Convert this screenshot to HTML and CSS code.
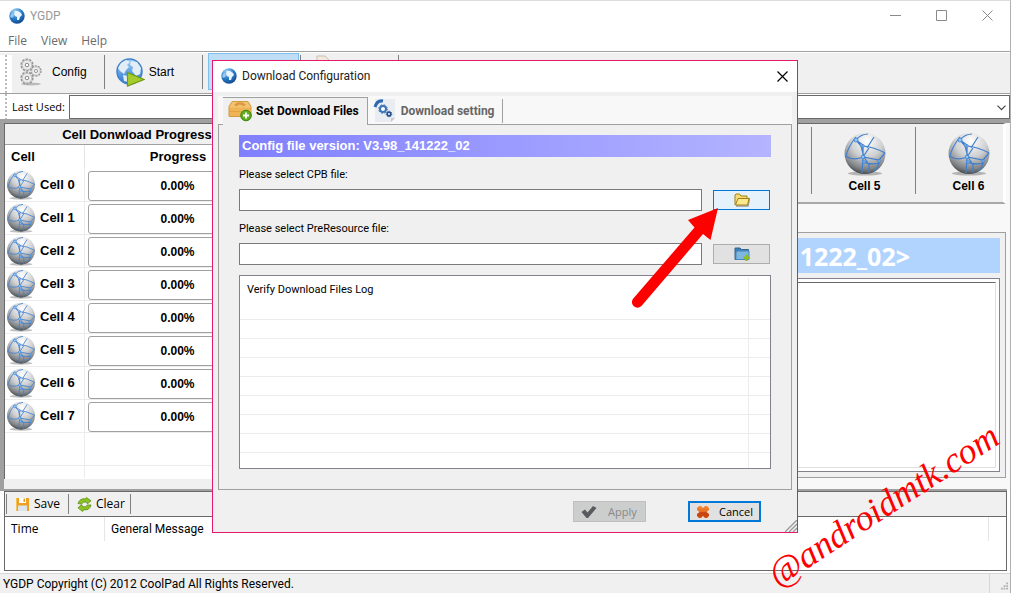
FILE: index.html
```
<!DOCTYPE html>
<html lang="en">
<head>
<meta charset="utf-8">
<title>YGDP</title>
<link rel="stylesheet" href="styles.css">
</head>
<body>
<svg class="defs" aria-hidden="true">
  <defs>
    <radialGradient id="ball" cx=".55" cy=".2" r=".85"><stop offset="0" stop-color="#fff"/><stop offset=".45" stop-color="#cfd0d2"/><stop offset=".8" stop-color="#808386"/><stop offset="1" stop-color="#35383b"/></radialGradient>
    <radialGradient id="blue" cx=".35" cy=".2" r=".9"><stop offset="0" stop-color="#9fd2f5"/><stop offset=".5" stop-color="#2b7fca"/><stop offset="1" stop-color="#0b3f86"/></radialGradient>
    <linearGradient id="sky" x2="0" y2="1"><stop offset="0" stop-color="#9fd0f8"/><stop offset="1" stop-color="#2b78d0"/></linearGradient>
    <linearGradient id="orange" x2="0" y2="1"><stop offset="0" stop-color="#f58a34"/><stop offset=".5" stop-color="#e56a20"/><stop offset=".55" stop-color="#c8420c"/><stop offset="1" stop-color="#d04a10"/></linearGradient>
    <symbol id="globe" viewBox="0 0 44 44">
      <ellipse cx="22" cy="41.500" rx="17" ry="2" fill="#000" opacity=".25"/>
      <circle cx="22" cy="21.500" r="20.500" fill="url(#ball)"/>
      <g fill="none" stroke="#3f7fce" stroke-width="1.200">
        <path d="M13 5Q5 15 3 24M13 8L20 13L20 25M13 8L18 14L21 25L36 28L42 21M20 14Q31 15 42 21M24 16L31 5M2 24Q11 29 20 25M20 25L26 16M20 25L19 41M20 30Q28 33 37 31M36 29Q36 35 31 39M13 8Q18 2 25 2M21 25L26 33L26 41"/>
      </g>
      <g fill="#8ec8ff" stroke="#3f7fce" stroke-width=".8"><circle cx="13" cy="8" r="2"/><circle cx="20" cy="25" r="1.800"/><circle cx="20" cy="14" r="1.300"/><circle cx="21" cy="30" r="1.300"/><circle cx="36" cy="29" r="1.300"/></g>
    </symbol>
    <symbol id="logo" viewBox="0 0 16 16">
      <circle cx="8" cy="8" r="7.700" fill="url(#blue)"/>
      <path d="M6 3L9 3L12 5L13 7L11 9L10 12L8 12L8 9L6 8L5 6Z" fill="#e9f5fd"/>
      <path d="M2 6L4 5L5 8L3 10L1 9Z" fill="#b9dcf3" opacity=".7"/>
    </symbol>
    <symbol id="gear" viewBox="0 0 14 14">
      <circle cx="7" cy="7" r="5.800" fill="#e9e9e9" stroke="#969696" stroke-width="1.600" stroke-dasharray="2.400 1.200"/>
      <circle cx="7" cy="7" r="4.800" fill="#ededed" stroke="#b5b5b5" stroke-width=".8"/>
      <circle cx="7" cy="7" r="1.800" fill="#fff" stroke="#888"/>
    </symbol>
  </defs>
</svg>

<div class="app">
  <header class="titlebar">
    <svg class="logo"><use href="#logo"/></svg>
    <span class="app-name">YGDP</span>
    <div class="win-buttons">
      <button class="win-button" aria-label="Minimize"><svg viewBox="0 0 11 11"><path d="M0 5.500H11"/></svg></button>
      <button class="win-button" aria-label="Maximize"><svg viewBox="0 0 11 11"><path d="M.5 .5H10.500V10.500H.5Z"/></svg></button>
      <button class="win-button" aria-label="Close"><svg viewBox="0 0 11 11"><path d="M.5 .5L10.500 10.500M10.500 .5L.5 10.500"/></svg></button>
    </div>
  </header>
  <nav class="menubar"><button>File</button><button>View</button><button>Help</button></nav>
  <div class="toolbar">
    <i class="grip"></i>
    <button class="tool">
      <svg class="icon-gears" viewBox="0 0 25 28"><ellipse cx="12" cy="26" rx="10" ry="1.500" fill="#bbb"/><use href="#gear" x="1" y="0" width="14" height="14"/><use href="#gear" x="11" y="7" width="12" height="12"/><use href="#gear" x="1" y="13" width="14" height="14"/></svg>
      Config</button>
    <button class="tool tool-start">
      <svg class="icon-start" viewBox="0 0 29 29"><circle cx="13.500" cy="13.500" r="12.500" fill="url(#sky)" stroke="#3f82cc" stroke-width="1.500"/><path d="M5 5L10 2L14 4L11 7L13 9L10 12L8 16L4 13L2 10ZM15 3L21 4L25 10L24 16L20 18L16 13L17 9L14 7ZM7 17L12 18L12 24L8 23Z" fill="#e3edf5"/><path d="M11.500 14.500L28 21.500L11.500 28Z" fill="#a3cc2c" stroke="#6f9a12" stroke-width="1.200"/></svg>
      Start</button>
    <button class="tool tool-active" aria-label="Stop"></button>
    <button class="tool tool-blank" aria-label="Log"><svg viewBox="0 0 16 16"><path d="M2 1H10L14 5V15H2Z" fill="#f3eadf" stroke="#cbbfae"/></svg></button>
  </div>
  <div class="lastbar">
    <i class="grip"></i>
    <label for="last">Last Used:</label>
    <div class="combo"><select id="last"><option></option></select>
      <svg viewBox="0 0 9 6"><path d="M.5 .7L4.500 4.700L8.500 .7"/></svg></div>
  </div>

  <main class="workspace">
    <section class="cells">
      <h2>Cell Donwload Progress</h2>
      <table>
        <thead><tr><th class="name-col">Cell</th><th class="prog-col">Progress</th></tr></thead>
        <tbody>
          <tr><td><div class="cell"><svg><use href="#globe"/></svg>Cell 0</div></td><td><div class="bar">0.00%</div></td></tr>
          <tr><td><div class="cell"><svg><use href="#globe"/></svg>Cell 1</div></td><td><div class="bar">0.00%</div></td></tr>
          <tr><td><div class="cell"><svg><use href="#globe"/></svg>Cell 2</div></td><td><div class="bar">0.00%</div></td></tr>
          <tr><td><div class="cell"><svg><use href="#globe"/></svg>Cell 3</div></td><td><div class="bar">0.00%</div></td></tr>
          <tr><td><div class="cell"><svg><use href="#globe"/></svg>Cell 4</div></td><td><div class="bar">0.00%</div></td></tr>
          <tr><td><div class="cell"><svg><use href="#globe"/></svg>Cell 5</div></td><td><div class="bar">0.00%</div></td></tr>
          <tr><td><div class="cell"><svg><use href="#globe"/></svg>Cell 6</div></td><td><div class="bar">0.00%</div></td></tr>
          <tr><td><div class="cell"><svg><use href="#globe"/></svg>Cell 7</div></td><td><div class="bar">0.00%</div></td></tr>
          <tr><td></td><td></td></tr>
          <tr class="rest"><td></td><td></td></tr>
        </tbody>
      </table>
    </section>
    <section class="detail">
      <div class="cell-tabs">
        <button class="cell-tab"><svg><use href="#globe"/></svg>Cell 5</button>
        <button class="cell-tab"><svg><use href="#globe"/></svg>Cell 6</button>
      </div>
      <div class="page">
        <div class="version">1222_02&gt;</div>
        <div class="log"><div class="log-inner"></div></div>
      </div>
    </section>
  </main>

  <section class="messages">
    <div class="msg-tools">
      <button><svg viewBox="0 0 15 15"><path d="M1 1H14V14H1Z" fill="#f0a020"/><path d="M4 1H11V6H4Z" fill="#fff"/><path d="M8.500 1.500H10V5H8.500Z" fill="#e59a24"/><path d="M3 8.500H12V14H3Z" fill="#dce3ea"/><path d="M1 1H2V14H1Z" fill="#f8c050"/></svg>Save</button>
      <button><svg viewBox="0 0 16 16"><path d="M1 7Q3 1 9 2L10 .5L15 4L11 7.500L10.500 5.500Q6 4.500 5 7.500ZM15 8.500Q13 15 7 13.500L6 15.500L1 11.500L5 8L6 10.500Q10 11 11 8.500Z" fill="#8cc221" stroke="#5a8a14" stroke-width=".8"/></svg>Clear</button>
    </div>
    <div class="msg-head"><span class="time">Time</span><span class="general">General Message</span><span class="end"></span></div>
  </section>
  <footer class="status"><span>YGDP Copyright (C) 2012 CoolPad All Rights Reserved.</span>
    <svg viewBox="0 0 8 8"><path d="M6 0h2v2h-2zM3 3h2v2h-2zM6 3h2v2h-2zM0 6h2v2h-2zM3 6h2v2h-2zM6 6h2v2h-2z" fill="#b0b0b0"/></svg></footer>
</div>

<div class="dialog" role="dialog" aria-label="Download Configuration">
  <header class="dlg-title">
    <svg class="logo"><use href="#logo"/></svg>
    <span>Download Configuration</span>
    <button class="dlg-close" aria-label="Close"><svg viewBox="0 0 11 11"><path d="M.5 .5L10.500 10.500M10.500 .5L.5 10.500"/></svg></button>
  </header>
  <div class="dlg-body">
    <div class="tabs" role="tablist">
      <button class="tab tab-on" role="tab" aria-selected="true"><svg viewBox="0 0 24 21"><path d="M4 1H20L23 6V16H1V6Z" fill="#efb555" stroke="#d39a42"/><path d="M4.500 1.500H19.500L22.500 7H1.500Z" fill="#f3c374"/><path d="M6 4Q12 -1 18 4L16 6L12 4L8 6Z" fill="#dc9a40"/><path d="M2 11H22" stroke="#e2a345"/><circle cx="18" cy="15" r="5.300" fill="#63ad20" stroke="#3c8410"/><path d="M18 12V18M15 15H21" stroke="#fff" stroke-width="1.800"/></svg>Set Download Files</button>
      <button class="tab" role="tab"><svg viewBox="0 0 24 24"><path d="M2 0H22V19L18 23H2Z" fill="#e9edf2"/><path d="M22 19L18 23V19Z" fill="#c3c8d0"/><path d="M2 8Q4 1 10 2" fill="none" stroke="#2d69b0" stroke-width="3"/><circle cx="10" cy="10" r="3" fill="#fff" stroke="#3d74b8" stroke-width="2"/><circle cx="10" cy="10" r="4.300" fill="none" stroke="#3d74b8" stroke-dasharray="1.800 1.600"/><circle cx="16" cy="15" r="1.800" fill="#fff" stroke="#22518e" stroke-width="1.700"/><circle cx="16" cy="15" r="2.800" fill="none" stroke="#22518e" stroke-width=".8" stroke-dasharray="1.300 1.200"/></svg>Download setting</button>
    </div>
    <div class="tab-page">
      <h3>Config file version: V3.98_141222_02</h3>
      <label for="cpb">Please select CPB file:</label>
      <div class="file-row"><input id="cpb" type="text"><button class="browse browse-hot" aria-label="Browse CPB file"><svg viewBox="0 0 16 14"><path d="M2 13H14L15.500 5" fill="none" stroke="#666" stroke-width="1.500" opacity=".6"/><path d="M1 12V2L2 1H5.500L7 3H13V6" fill="#f5dc74" stroke="#a68014"/><path d="M4 5.500H15L13.500 12H1.500Z" fill="#fbe98d" stroke="#a68014"/></svg></button></div>
      <label for="pre">Please select PreResource file:</label>
      <div class="file-row"><input id="pre" type="text"><button class="browse" aria-label="Browse PreResource file"><svg viewBox="0 0 16 14"><path d="M1 12.500V1H6L7.500 2.500H14.500V12.500Z" fill="#3f7fb8" stroke="#33638f"/><path d="M2 5L4 4H15V12.500H2Z" fill="#7db7e2" stroke="#4b86b8"/><path d="M12.500 7.500V14M9.500 10.800H15.800" stroke="#8fc01c" stroke-width="2.400"/></svg></button></div>
      <div class="verify">
        <div class="verify-head">Verify Download Files Log</div>
        <div class="verify-rows"></div>
      </div>
    </div>
    <div class="actions">
      <button class="action" disabled><svg viewBox="0 0 16 14"><path d="M.5 7L4 4.500L6.500 7.500L12 1L15.500 3L7 13H5.500Z" fill="#575b5e"/></svg><span>Apply</span></button>
      <button class="action action-main"><svg viewBox="0 0 14 14"><path d="M1 3L3 1L5 1L7 3L9 1L11 1L13 3L13 5L10.500 7L13 9L13 11L11 13L9 13L7 11L5 13L3 13L1 11L1 9L3.500 7L1 5Z" fill="url(#orange)"/></svg><span>Cancel</span></button>
    </div>
  </div>
  <svg class="resize" viewBox="0 0 12 12"><path d="M0 12L12 0M4 12L12 4M8 12L12 8" stroke="#999" stroke-width="1.300"/></svg>
  <svg class="arrow" viewBox="0 0 90 104"><path d="M86 1L56 13L62.500 20.500L1.300 91.500A5.500 5.500 0 0 0 9.700 98.800L71 27L78.500 33Z" fill="#f00"/></svg>
</div>
<div class="watermark">@androidmtk.com</div>
</body>
</html>
```
FILE: styles.css
```
* { box-sizing: border-box; }
body { margin: 0; position: relative; overflow: hidden; background: #fff; color: #000; font: 12px/16px Roboto, "Noto Sans", sans-serif; }
button { border: 0; padding: 0; margin: 0; background: none; font: inherit; color: inherit; }
svg { display: block; flex: none; }
.defs { position: absolute; width: 0; height: 0; }

.app { min-height: 100vh; display: flex; flex-direction: column; border: solid #b0b0b0; border-width: 1px 1px 0 0; border-top-color: #ddd; }
.logo { width: 16px; height: 16px; }
.titlebar { height: 29px; display: flex; align-items: center; gap: 5px; padding-left: 9px; color: #999; }
.win-buttons { margin-left: auto; display: flex; }
.win-button { width: 46px; height: 29px; display: grid; place-items: center; }
.win-button svg { width: 11px; height: 11px; fill: none; stroke: #8a8a8a; stroke-width: 1; }
.menubar { height: 22px; display: flex; align-items: center; gap: 14px; padding-left: 8px; color: #6c6c6c; border-bottom: 1px solid #a0a0a0; font-family: "Open Sans", sans-serif; }

.toolbar { height: 42px; display: flex; align-items: flex-start; padding-top: 2px; background: #f0f0f0; border-top: 1px solid #fff; border-bottom: 1px solid #a0a0a0; font: 12px/16px "Liberation Sans", sans-serif; }
.grip { align-self: stretch; width: 12px; background: repeating-linear-gradient(#bbb 0 2px, #fff 2px 4px) 5px 0 / 2px 100% no-repeat #fff; }
.tool { height: 34px; display: flex; align-items: center; padding: 0 17px 0 7px; gap: 8px; border-right: 1px solid #808080; }
.tool-start { padding: 0 28px 0 11px; gap: 4px; }
.icon-gears { width: 25px; height: 28px; }
.icon-start { width: 29px; height: 29px; }
.tool-active { width: 91px; height: 37px; margin: -2px 1px 0 5px; background: #bfddf5; border: 1px solid #7cc0f0; }
.tool-blank { width: 99px; padding-left: 14px; border-left: 1px solid #808080; align-items: flex-start; }
.tool-blank svg { width: 16px; height: 16px; }
.lastbar { height: 25px; display: flex; background: #fff; font: 11px/25px "Open Sans", sans-serif; }
.lastbar label { padding-right: 4px; }
.combo { flex: 1; position: relative; margin-top: 1px; }
.combo select { display: block; width: 100%; height: 24px; appearance: none; background: #fff; border: 1px solid #6a6a6a; border-radius: 0; }
.combo svg { position: absolute; right: 4px; top: 10px; width: 9px; height: 6px; fill: none; stroke: #444; stroke-width: 1.2; }

.workspace { flex: 1; display: flex; gap: 8px; background: #f0f0f0; border: solid #a0a0a0; border-width: 4px 0 0 4px; font: bold 13px/16px "Liberation Sans", sans-serif; }
.cells { width: 268px; margin-bottom: 12px; background: #fff; border: solid #696969; border-width: 1px 0 0 1px; display: flex; flex-direction: column; }
.cells h2 { margin: 0; height: 21px; font: inherit; line-height: 21px; text-align: center; padding-right: 3px; background: #f0f0f0; border-bottom: 1px solid #a0a0a0; }
.cells table { width: 100%; border-collapse: separate; border-spacing: 0; table-layout: fixed; }
.cells th { height: 24px; padding: 0; border-right: 1px solid #e5e5e5; }
.name-col { width: 80px; text-align: left; }
.cells .name-col { padding-left: 6px; }
.cells td { height: 33px; padding: 0; border: solid #ececec; border-width: 0 1px 1px 0; }
.cells .rest td { height: 12px; border-bottom: 0; }
.cell { display: flex; align-items: center; gap: 4px; padding-left: 1px; }
.cell svg { width: 30px; height: 30px; }
.bar { height: 30px; margin: 1px 4px 0 3px; border: 1px solid #a0a0a0; border-radius: 3px; display: grid; place-items: center; font-size: 12px; }

.detail { flex: 1; display: flex; flex-direction: column; padding: 0 4px 13px 0; background: #f8f8f8; }
.cell-tabs { display: flex; justify-content: flex-end; height: 81px; padding-top: 3px; background: #f0f0f0; border-top: 1px solid #696969; border-bottom: 2px solid #a8a8a8; border-right: 3px solid #fff; overflow: hidden; }
.cell-tab { flex: none; width: 104px; height: 67px; border-left: 1px solid #808080; display: flex; flex-direction: column; align-items: center; padding: 5px 0 0 2px; gap: 2px; font: bold 12px/16px "Liberation Sans", sans-serif; }
.cell-tab:last-child { margin-right: -16px; }
.cell-tab svg { width: 44px; height: 44px; }
.page { flex: 1; margin-top: 28px; padding: 5px; border: 1px solid #a0a0a0; background: #f0f0f0; display: flex; flex-direction: column; gap: 5px; }
.version { height: 35px; background: #b1d4ff; color: #fff; text-align: right; padding-right: 90px; font: bold 25px/36px "Open Sans", sans-serif; }
.log { flex: 1; background: #fff; border: 1px solid #82828f; padding: 3px; display: flex; }
.log-inner { flex: 1; border: solid #e0e0e0; border-width: 1px 1px 1px 0; border-top-color: #696969; }

.messages { margin: 0 3px 0 4px; border: 1px solid #696969; height: 80px; background: #fff; box-shadow: 0 -2px #a0a0a0; }
.msg-tools { height: 25px; display: flex; background: #f0f0f0; border-bottom: 1px solid #696969; padding: 2px 0 2px 1px; }
.msg-tools button { display: flex; align-items: center; gap: 4px; width: 62px; padding-left: 8px; border-left: 1px solid #808080; }
.msg-tools button:last-child { width: 63px; border-right: 1px solid #808080; }
.msg-tools svg { width: 15px; height: 15px; }
.msg-tools, .msg-head { font-family: "Open Sans", sans-serif; }
.msg-head { display: flex; height: 24px; line-height: 24px; }
.msg-head .time { width: 100px; padding-left: 6px; border-right: 1px solid #e5e5e5; }
.msg-head .general { flex: 1; padding-left: 6px; border-right: 1px solid #e5e5e5; font-family: Roboto, sans-serif; }
.msg-head .end { width: 17px; }
.status { height: 20px; margin-top: 2px; display: flex; align-items: center; justify-content: space-between; padding: 0 2px 0 3px; background: #f0f0f0; border-top: 1px solid #d7d7d7; }
.status svg { width: 19px; height: 19px; padding: 8px 0 3px 11px; border-left: 1px solid #d7d7d7; }

.dialog { position: absolute; left: 212px; right: 213px; top: 60px; border: 1px solid #e5196e; background: #f0f0f0; }
.dlg-title { height: 31px; display: flex; align-items: center; gap: 5px; padding: 0 0 1px 8px; background: #fff; color: #222; }
.dlg-close { margin-left: auto; width: 30px; height: 28px; display: grid; place-items: center; }
.dlg-close svg { width: 11px; height: 11px; fill: none; stroke: #000; stroke-width: 1.200; }
.dlg-body { padding: 4px 5px 10px; }
.tabs { display: flex; height: 28px; padding: 1px 0 0 5px; background: #f8f8f8; }
.tab { display: flex; align-items: center; gap: 4px; height: 24px; margin-top: 2px; padding: 0 8px 0 5px; color: #666; border-right: 1px solid #a0a0a0; font: bold 12px/16px Roboto, "Liberation Sans", sans-serif; }
.tab svg { width: 24px; height: 24px; }
.tab-on { position: relative; height: 28px; margin-top: 0; padding: 0 8px 2px 5px; color: #000; background: #f0f0f0; border-top: 1px solid #a0a0a0; }
.tab-page { border: 1px solid #a0a0a0; padding: 10px 20px 20px; font: 11px/16px Roboto, "Noto Sans", sans-serif; }
.tab-page h3 { margin: 0 0 10px; height: 22px; padding-left: 3px; color: #fff; background: linear-gradient(90deg, #8080ff, #b4b4ff); font: bold 13px/22px "Liberation Sans", sans-serif; }
.tab-page label { display: block; }
.file-row { display: flex; align-items: center; gap: 11px; margin: 6px 0 10px; padding-right: 1px; }
.file-row input { flex: 1; min-width: 0; height: 22px; padding: 0 4px; border: 1px solid #7a7a7a; background: #fff; font: inherit; }
.browse { width: 57px; height: 20px; display: grid; place-items: center; background: #e1e1e1; border: 1px solid #adadad; }
.browse svg { width: 16px; height: 14px; }
.browse-hot { background: #e5f1fb; border-color: #0078d7; }
.verify { height: 194px; border: 1px solid #82828f; background: linear-gradient(#ececec, #ececec) calc(100% - 21px) 2px / 1px 100% no-repeat #fff; }
.verify-head { height: 25px; padding: 6px 7px 0; }
.verify-rows { height: 167px; background: repeating-linear-gradient(transparent 0 18px, #ececec 18px 19px); }
.actions { display: flex; justify-content: flex-end; gap: 42px; margin-top: 11px; padding-right: 31px; }
.action { width: 73px; height: 21px; display: flex; align-items: center; gap: 11px; padding-left: 7px; background: #e1e1e1; border: 1px solid #bfbfbf; font: 11px/16px "Open Sans", sans-serif; }
.action svg { width: 16px; height: 14px; }
.action:disabled { background: #cccecd; color: #888; }
.action-main { border: 2px solid #0078d7; padding-left: 5px; gap: 8px; }
.resize { position: absolute; right: 0; bottom: 0; width: 12px; height: 12px; }
.arrow { position: absolute; right: 75px; top: 146px; width: 90px; height: 104px; }
.watermark { position: absolute; right: -6px; bottom: 68px; white-space: nowrap; color: #f00; font: italic 36px/40px "Liberation Serif", serif; transform: rotate(-33deg); }
```
